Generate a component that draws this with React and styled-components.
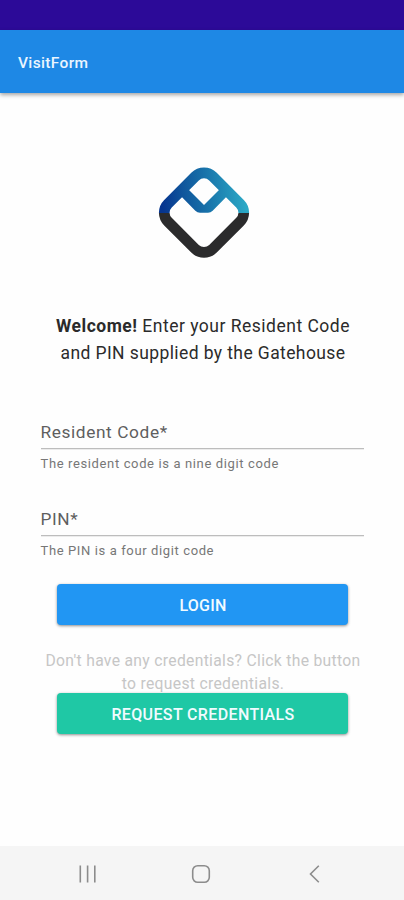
import React from 'react';
import styled, { createGlobalStyle, css } from 'styled-components';

const colors = {
  status: '#2c0a98',
  primary: '#1e88e5',
  login: '#2196f3',
  request: '#1fc8a5',
  nav: '#f5f5f5',
  icon: '#8c8c8c',
};

const GlobalStyle = createGlobalStyle`
  body {
    margin: 0;
    background: #fefefe;
    font-family: Roboto, "Liberation Sans", sans-serif;
  }
`;

const Screen = styled.div`
  display: flex;
  flex-direction: column;
  height: 900px;
  overflow: hidden;
`;

const StatusBar = styled.div`
  flex: 0 0 30px;
  background: ${colors.status};
`;

const AppBar = styled.header`
  display: flex;
  align-items: center;
  flex: 0 0 63px;
  padding: 2px 18px 0;
  box-sizing: border-box;
  background: ${colors.primary};
  box-shadow: 0 2px 4px rgba(0, 0, 0, 0.35);
`;

const AppTitle = styled.h1`
  margin: 0;
  color: #eaf5ff;
  font-size: 15.5px;
  font-weight: 500;
  letter-spacing: 0.35px;
`;

const Content = styled.main`
  flex: 1;
  display: flex;
  flex-direction: column;
  align-items: center;
`;

const LogoSvg = styled.svg`
  display: block;
  width: 110px;
  height: 110px;
  margin: 67px 0 0 6px;
`;

const Welcome = styled.p`
  margin: 43px 0 0;
  color: #2b2b2b;
  font-size: 17.5px;
  line-height: 27px;
  text-align: center;
  white-space: nowrap;
`;

const Line = styled.span`
  display: block;
  padding-left: 2px;
  letter-spacing: ${({ spacing }) => spacing}px;
`;

const Form = styled.form`
  width: 323px;
  margin: 50px 0 -7px;
`;

const FieldWrapper = styled.div`
  height: 87px;
`;

const Label = styled.label`
  display: block;
  height: 32px;
  border-bottom: 1px solid #bdbdbd;
  box-shadow: 0 1px 0 #ececec;
  box-sizing: border-box;
  color: #5f5f5f;
  font-size: 17.3px;
  line-height: 30px;
  letter-spacing: ${({ spacing }) => spacing}px;
`;

const Helper = styled.span`
  display: block;
  color: #777;
  font-size: 13px;
  line-height: 30px;
  letter-spacing: ${({ spacing }) => spacing}px;
`;

const Button = styled.button`
  display: block;
  width: 291px;
  height: 41px;
  padding: 2px 0 0 2px;
  border: 0;
  border-radius: 4px;
  background: ${colors.login};
  box-shadow: 0 1px 3px rgba(0, 0, 0, 0.45);
  color: #f1fbff;
  font-family: inherit;
  font-size: 16px;
  font-weight: 500;
  letter-spacing: ${({ spacing }) => spacing}px;

  ${({ request }) => request && css`
    background: ${colors.request};
  `}
`;

const Hint = styled.p`
  margin: 25px 0 -2px;
  color: #c6c6c6;
  font-size: 15.7px;
  line-height: 22.5px;
  text-align: center;
  white-space: nowrap;
`;

const NavBar = styled.nav`
  flex: 0 0 54px;
  display: grid;
  grid-template-columns: repeat(3, 113.5px);
  justify-content: center;
  align-items: center;
  justify-items: center;
  padding-top: 2px;
  box-sizing: border-box;
  background: ${colors.nav};
`;

const NavIcon = styled.svg`
  width: 24px;
  height: 24px;
  margin-right: 2px;
  fill: none;
  stroke: ${colors.icon};
  stroke-width: 1.6;
`;

const Logo = () => (
  <LogoSvg viewBox="0 0 330 330">
    <defs>
      <linearGradient id="blue" gradientUnits="userSpaceOnUse" x1="40" y1="160" x2="290" y2="140">
        <stop offset="0" stopColor="#06358f" />
        <stop offset="0.25" stopColor="#0f559c" />
        <stop offset="0.5" stopColor="#176fa8" />
        <stop offset="1" stopColor="#2ba9c6" />
      </linearGradient>
      <clipPath id="upper"><rect width="330" height="159" /></clipPath>
      <clipPath id="lower"><rect y="159" width="330" height="171" /></clipPath>
      <path
        id="ring"
        d="M135.1 49.9A38 38 0 0 1 188.9 49.9L270.1 131.1A38 38 0 0 1 270.1 184.9L188.9 266.1A38 38 0 0 1 135.1 266.1L53.9 184.9A38 38 0 0 1 53.9 131.1Z"
        fill="none"
        strokeWidth="32"
      />
    </defs>
    <use href="#ring" stroke="#2b2b2c" clipPath="url(#lower)" />
    <use href="#ring" stroke="url(#blue)" clipPath="url(#upper)" />
    <path d="M83 98 L136 152 Q142 158 150 158 H174 Q182 158 188 152 L241 98 L219 78 L162 135 L105 78 Z" fill="url(#blue)" />
  </LogoSvg>
);

const Field = ({ label, helper, labelSpacing, helperSpacing }) => (
  <FieldWrapper>
    <Label spacing={labelSpacing}>{label}</Label>
    <Helper spacing={helperSpacing}>{helper}</Helper>
  </FieldWrapper>
);

const App = () => (
  <Screen>
    <GlobalStyle />
    <StatusBar />
    <AppBar>
      <AppTitle>VisitForm</AppTitle>
    </AppBar>
    <Content>
      <Logo />
      <Welcome>
        <Line spacing={0.5}><b>Welcome!</b> Enter your Resident Code</Line>
        <Line spacing={0.4}>and PIN supplied by the Gatehouse</Line>
      </Welcome>
      <Form>
        <Field
          label="Resident Code*"
          helper="The resident code is a nine digit code"
          labelSpacing={0.6}
          helperSpacing={0.63}
        />
        <Field
          label="PIN*"
          helper="The PIN is a four digit code"
          labelSpacing={0.6}
          helperSpacing={0.62}
        />
      </Form>
      <Button type="button" spacing={0.2}>LOGIN</Button>
      <Hint>
        <Line spacing={0.31}>Don't have any credentials? Click the button</Line>
        <Line spacing={0.31}>to request credentials.</Line>
      </Hint>
      <Button type="button" request spacing={0.37}>REQUEST CREDENTIALS</Button>
    </Content>
    <NavBar>
      <NavIcon viewBox="0 0 24 24"><path d="M4.3 3.5v17M11.6 3.5v17M18.8 3.5v17" /></NavIcon>
      <NavIcon viewBox="0 0 24 24"><rect x="3.7" y="3.7" width="16.6" height="16.6" rx="5" /></NavIcon>
      <NavIcon viewBox="0 0 24 24"><path d="M15.8 3.8L7.5 12l8.3 8.2" /></NavIcon>
    </NavBar>
  </Screen>
);

export default App;
